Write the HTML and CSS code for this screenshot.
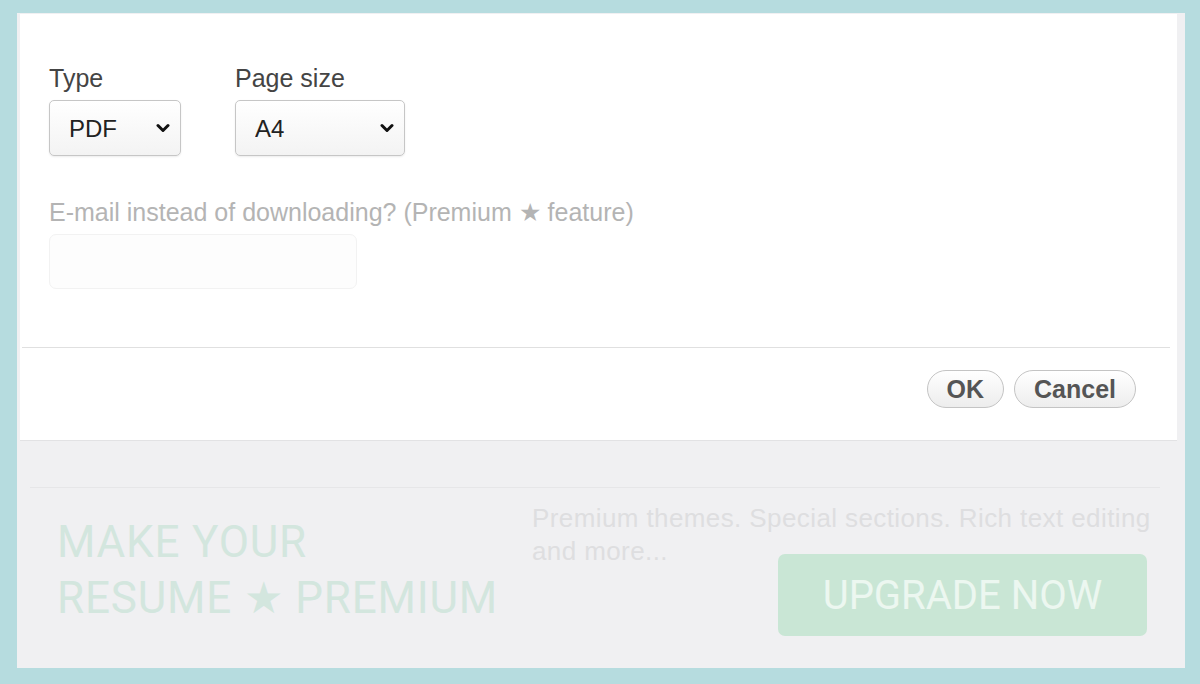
FILE: index.html
```html
<!DOCTYPE html>
<html>
<head>
<meta charset="utf-8">
<title>Download resume</title>
<link rel="stylesheet" href="styles.css">
</head>
<body>
<div class="screen">
	<form class="dialog" id="downloadForm">
		<div class="dialog-body">
			<div class="field-row">
				<div class="field">
					<label class="field-label" for="fileType">Type</label>
					<div class="select-wrap select-type">
						<select class="select" id="fileType" name="type">
							<option value="pdf">PDF</option>
							<option value="docx">DOCX</option>
							<option value="txt">TXT</option>
						</select>
						<svg class="chevron" width="14" height="10" viewBox="0 0 14 10"><path d="M2 2.5l5 5 5-5" fill="none" stroke="#111" stroke-width="3" stroke-linecap="round" stroke-linejoin="round"/></svg>
					</div>
				</div>
				<div class="field">
					<label class="field-label" for="pageSize">Page size</label>
					<div class="select-wrap select-size">
						<select class="select" id="pageSize" name="size">
							<option value="a4">A4</option>
							<option value="letter">Letter</option>
						</select>
						<svg class="chevron" width="14" height="10" viewBox="0 0 14 10"><path d="M2 2.5l5 5 5-5" fill="none" stroke="#111" stroke-width="3" stroke-linecap="round" stroke-linejoin="round"/></svg>
					</div>
				</div>
			</div>
			<div class="field field-email">
				<label class="field-label muted" for="emailTo">E-mail instead of downloading? (Premium ★ feature)</label>
				<input class="text-input" id="emailTo" name="email" disabled />
			</div>
		</div>
		<div class="dialog-footer">
			<button type="submit" class="pill-button">OK</button>
			<button type="button" class="pill-button">Cancel</button>
		</div>
	</form>

	<div class="promo">
		<h2 class="promo-title">MAKE YOUR<br>RESUME ★ PREMIUM</h2>
		<div class="promo-side">
			<p class="promo-text">Premium themes. Special sections. Rich text editing and more...</p>
			<a class="upgrade-button" href="#">UPGRADE NOW</a>
		</div>
	</div>
</div>
</body>
</html>
```

FILE: styles.css
```css
*{margin: 0;padding: 0;box-sizing: border-box;}
html,body{height: 100%;}
body{background-color: #b6dcdf;padding: 13px 15px 16px 17px;font-family: "Liberation Sans", Arial, sans-serif;color: #444;overflow: hidden;}
.screen{height: 655px;background-color: #f0f0f2;padding-top: 1px;}

/* dialog */
.dialog{display: block;background-color: #fff;margin: 0 8px 0 3px;height: 426px;box-shadow: 0 1px 0 #e2e2e4;}
.dialog-body{padding: 50px 29px 0 27px;height: 334px;border-bottom: 1px solid #e0e0e0;margin: 0 7px 0 2px;}
.field-row{display: flex;gap: 54px;}
.field-label{display: block;font-size: 25px;line-height: 28px;color: #444;}
.field-label.muted{color: #b4b4b4;}
.select-wrap{position: relative;margin-top: 8px;height: 56px;}
.select-type{width: 132px;}
.select-size{width: 170px;}
.select{appearance: none;-webkit-appearance: none;width: 100%;height: 56px;border: 1px solid #c6c6c6;border-radius: 5px;background: linear-gradient(#fff, #f3f3f3);box-shadow: 0 1px 2px rgba(0,0,0,0.08);font-family: "Liberation Sans", Arial, sans-serif;font-size: 24px;color: #222;padding: 0 19px;outline: 0;}
.chevron{position: absolute;right: 11px;top: 23px;pointer-events: none;}
.field-email{margin-top: 42px;}
.text-input{display: block;margin-top: 8px;width: 308px;height: 55px;border: 1px solid #f2f2f2;border-radius: 7px;background-color: #fdfdfd;outline: 0;}

.dialog-footer{display: flex;justify-content: flex-end;gap: 10px;padding: 22px 41px 0 0;}
.pill-button{height: 38px;padding: 0 19px;border: 1px solid #c4c4c4;border-radius: 20px;background: linear-gradient(#fff, #ededed);font-family: "Liberation Sans", Arial, sans-serif;font-weight: bold;font-size: 25px;color: #555;cursor: pointer;}
.pill-button:hover{opacity: 0.8;}

/* faded page behind the dialog */
.promo{display: flex;margin: 47px 25px 0 13px;border-top: 1px solid #e6e6e8;padding: 26px 6px 0 27px;}
.promo-title{font-family: Roboto, "Liberation Sans", sans-serif;font-weight: normal;font-size: 44px;line-height: 56px;letter-spacing: 0.8px;color: #d3e6de;width: 475px;flex: none;}
.promo-side{flex: 1;display: flex;flex-direction: column;align-items: flex-end;margin-top: -12px;}
.promo-text{align-self: stretch;font-size: 26px;line-height: 33px;letter-spacing: 0.4px;color: #dedee0;}
.upgrade-button{display: flex;align-items: center;justify-content: center;width: 369px;height: 82px;margin-top: -14px;margin-right: 7px;background-color: #c9e6d5;border-radius: 7px;font-family: Roboto, "Liberation Sans", sans-serif;font-size: 40px;color: #ecf7f0;text-decoration: none;}
```
